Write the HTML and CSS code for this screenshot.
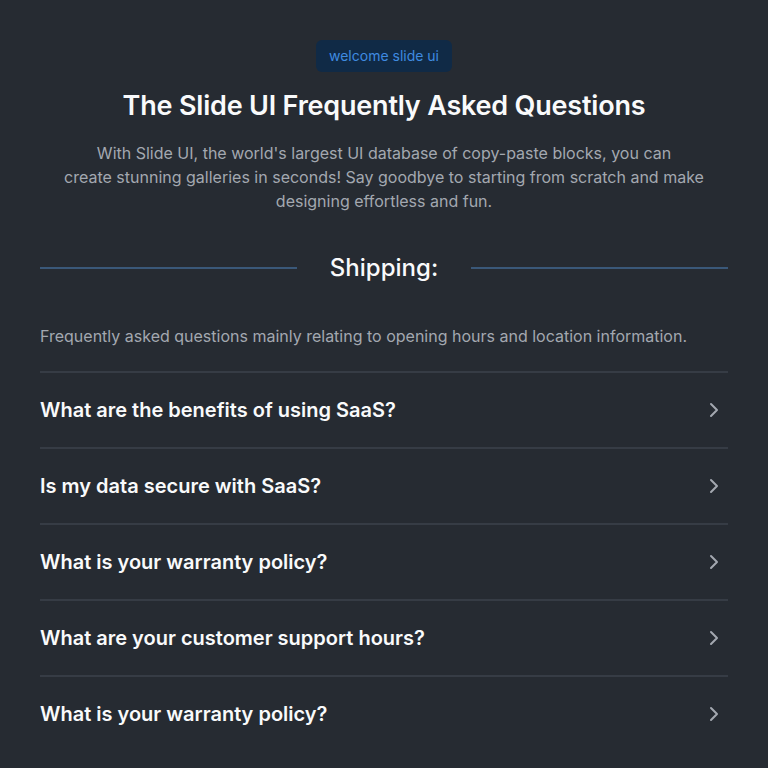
FILE: index.html
```html
<!DOCTYPE html>
<html lang="en">
<head>
<meta charset="utf-8">
<title>FAQ</title>
<link rel="stylesheet" href="styles.css">
</head>
<body>
<main class="page">
  <header class="hero">
    <span class="badge">welcome slide ui</span>
    <h1 class="title">The Slide UI Frequently Asked Questions</h1>
    <p class="lead">With Slide UI, the world's largest UI database of copy-paste blocks, you can<br>create stunning galleries in seconds! Say goodbye to starting from scratch and make designing effortless and fun.</p>
  </header>
  <section class="section">
    <div class="section-head">
      <span class="rule"></span>
      <h2 class="section-title">Shipping:</h2>
      <span class="rule"></span>
    </div>
    <p class="section-desc">Frequently asked questions mainly relating to opening hours and location information.</p>
    <ul class="faq">
      <li class="faq-item"><span class="q">What are the benefits of using SaaS?</span><svg class="chev" viewBox="0 0 24 24" width="24" height="24"><path d="M9 6l6 6-6 6"/></svg></li>
      <li class="faq-item"><span class="q">Is my data secure with SaaS?</span><svg class="chev" viewBox="0 0 24 24" width="24" height="24"><path d="M9 6l6 6-6 6"/></svg></li>
      <li class="faq-item"><span class="q">What is your warranty policy?</span><svg class="chev" viewBox="0 0 24 24" width="24" height="24"><path d="M9 6l6 6-6 6"/></svg></li>
      <li class="faq-item"><span class="q">What are your customer support hours?</span><svg class="chev" viewBox="0 0 24 24" width="24" height="24"><path d="M9 6l6 6-6 6"/></svg></li>
      <li class="faq-item"><span class="q">What is your warranty policy?</span><svg class="chev" viewBox="0 0 24 24" width="24" height="24"><path d="M9 6l6 6-6 6"/></svg></li>
    </ul>
  </section>
</main>
</body>
</html>
```
FILE: styles.css
```css
html, body {
  margin: 0;
  padding: 0;
  background: #262b32;
}
body {
  font-family: Inter, "Noto Sans", sans-serif;
  color: #f3f4f6;
}
.page {
  padding: 40px 40px 0;
}
.hero {
  display: flex;
  flex-direction: column;
  align-items: center;
  text-align: center;
}
.badge {
  display: inline-block;
  height: 32px;
  line-height: 32px;
  padding: 0 13px;
  border-radius: 6px;
  background: #102a46;
  color: #3f8ae0;
  font-size: 14px;
}
.title {
  margin: 18px 0 0;
  font-size: 27px;
  line-height: 32px;
  font-weight: 600;
  color: #f9fafb;
  letter-spacing: -0.2px;
}
.lead {
  margin: 19px 0 0;
  max-width: 660px;
  font-size: 16px;
  line-height: 24px;
  color: #a3a8b0;
}
.section {
  margin-top: 39px;
}
.section-head {
  display: flex;
  align-items: center;
  gap: 33px;
}
.rule {
  flex: 1;
  height: 2px;
  background: #3a5879;
}
.section-title {
  margin: 0;
  font-size: 24px;
  line-height: 32px;
  font-weight: 500;
  color: #f9fafb;
}
.section-desc {
  margin: 40px 0 0;
  font-size: 16px;
  line-height: 24px;
  color: #a3a8b0;
}
.faq {
  list-style: none;
  margin: 23px 0 0;
  padding: 0;
}
.faq-item {
  display: flex;
  align-items: center;
  justify-content: space-between;
  height: 74px;
  border-top: 2px solid #363c45;
  padding-right: 2px;
}
.q {
  font-size: 20px;
  line-height: 28px;
  font-weight: 600;
  color: #f9fafb;
}
.chev {
  fill: none;
  stroke: #a3a8b0;
  stroke-width: 2;
  stroke-linecap: round;
  stroke-linejoin: round;
}
```
